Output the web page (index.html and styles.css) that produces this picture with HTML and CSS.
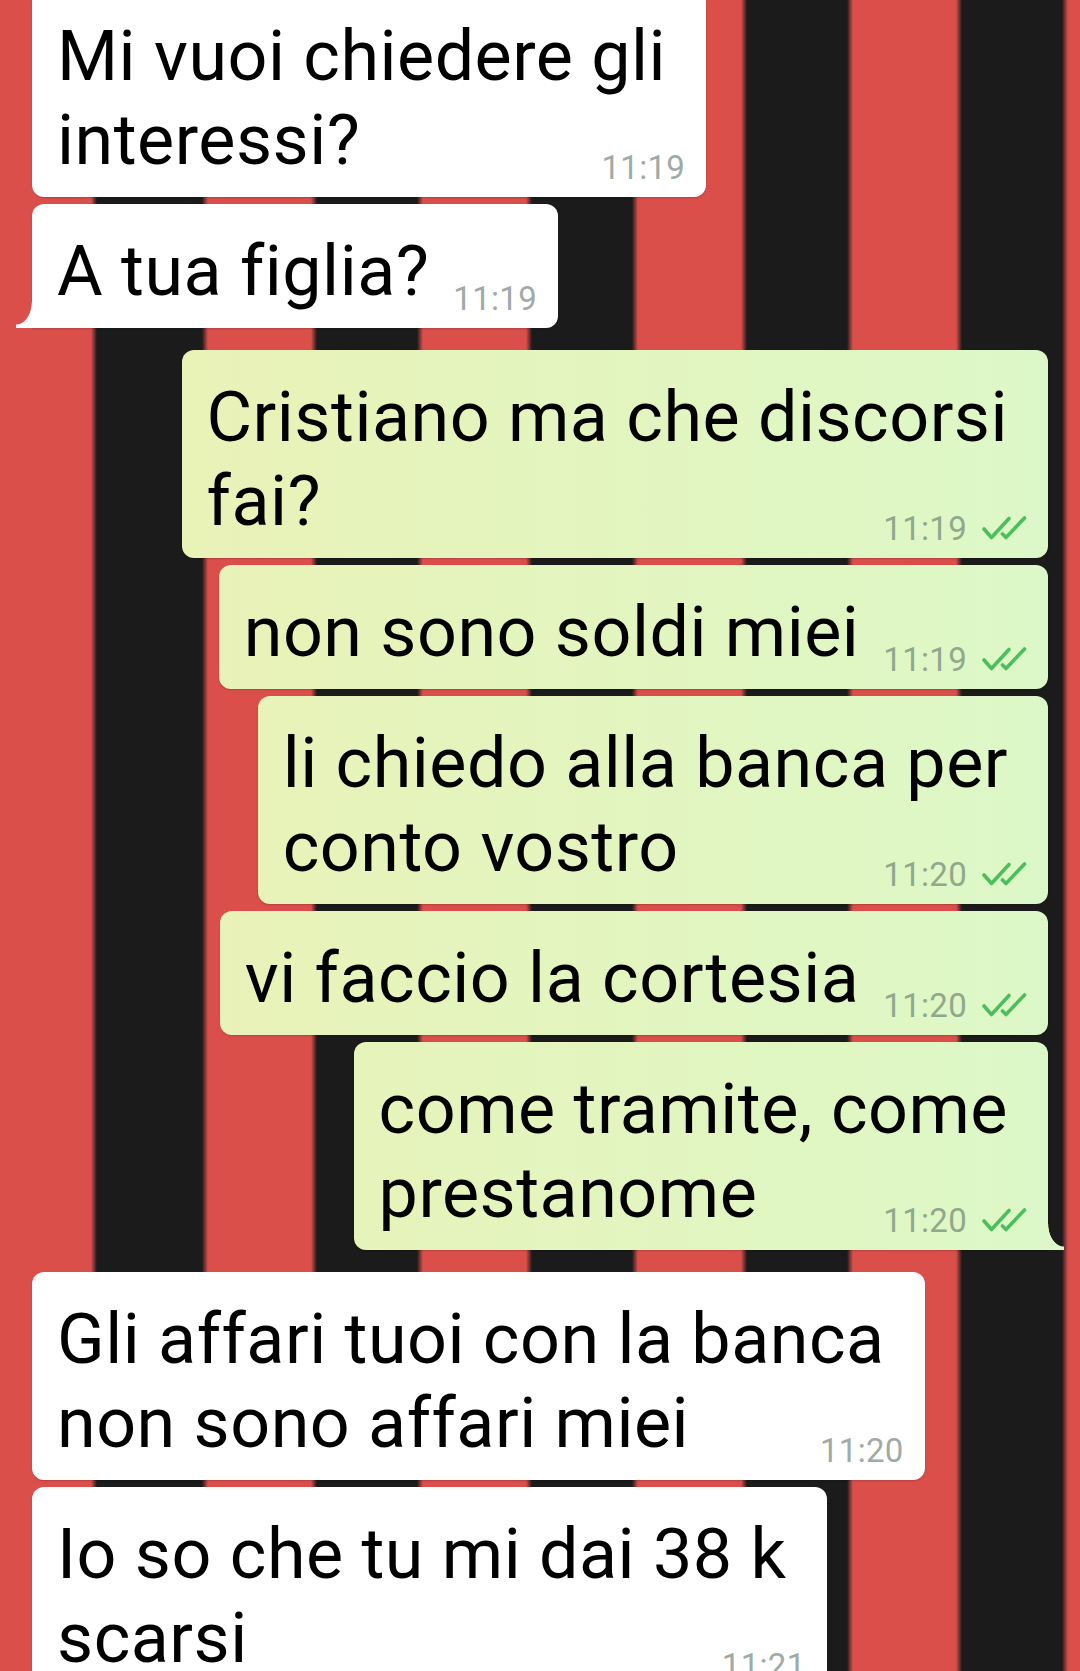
FILE: index.html
```html
<!DOCTYPE html>
<html lang="it">
<head>
  <meta charset="UTF-8" />
  <meta name="viewport" content="width=device-width, initial-scale=1.0"/>
  <title>Chat</title>
  <link rel="stylesheet" href="styles.css">
</head>
<body>

  <div class="chat">
    <div class="msg in">
      <p>Mi vuoi chiedere gli<br>interessi?<span class="meta"><span class="time">11:19</span></span></p>
    </div>
    <div class="msg in tail">
      <p>A tua figlia?<span class="meta"><span class="time">11:19</span></span></p>
    </div>

    <div class="msg out">
      <p>Cristiano ma che discorsi<br>fai?<span class="meta"><span class="time">11:19</span><svg class="ticks" viewBox="0 0 45 24"><path d="M2 13 L9.5 21.5 L27 2.5 M20.5 18 L24 21.5 L42.5 2"/></svg></span></p>
    </div>
    <div class="msg out">
      <p>non sono soldi miei<span class="meta"><span class="time">11:19</span><svg class="ticks" viewBox="0 0 45 24"><path d="M2 13 L9.5 21.5 L27 2.5 M20.5 18 L24 21.5 L42.5 2"/></svg></span></p>
    </div>
    <div class="msg out">
      <p>li chiedo alla banca per<br>conto vostro<span class="meta"><span class="time">11:20</span><svg class="ticks" viewBox="0 0 45 24"><path d="M2 13 L9.5 21.5 L27 2.5 M20.5 18 L24 21.5 L42.5 2"/></svg></span></p>
    </div>
    <div class="msg out">
      <p>vi faccio la cortesia<span class="meta"><span class="time">11:20</span><svg class="ticks" viewBox="0 0 45 24"><path d="M2 13 L9.5 21.5 L27 2.5 M20.5 18 L24 21.5 L42.5 2"/></svg></span></p>
    </div>
    <div class="msg out tail">
      <p>come tramite, come<br>prestanome<span class="meta"><span class="time">11:20</span><svg class="ticks" viewBox="0 0 45 24"><path d="M2 13 L9.5 21.5 L27 2.5 M20.5 18 L24 21.5 L42.5 2"/></svg></span></p>
    </div>

    <div class="msg in">
      <p>Gli affari tuoi con la banca<br>non sono affari miei<span class="meta"><span class="time">11:20</span></span></p>
    </div>
    <div class="msg in">
      <p>Io so che tu mi dai 38 k<br>scarsi<span class="meta"><span class="time">11:21</span></span></p>
    </div>
  </div>

</body>
</html>
```

FILE: styles.css
```css
* {
  box-sizing: border-box;
}

body {
  margin: 0;
  height: 1671px;
  overflow: hidden;
  font-family: Roboto, "Noto Sans", sans-serif;
  color: #000;
  background: repeating-linear-gradient(90deg, #1b1b1b 0 100px, #db4f4b 106px 209px, #1b1b1b 215px);
  background-position: 102px 0;
}

.chat {
  display: flex;
  flex-direction: column;
  padding: 0 32px;
  margin-top: -18px;
}

.msg {
  position: relative;
  display: flow-root;
  width: fit-content;
  margin-top: 7px;
  padding: 25px 40px 15px 25px;
  border-radius: 12px;
  font-size: 70px;
  line-height: 84px;
  letter-spacing: 0.5px;
  box-shadow: 0 1px 2px rgba(0, 0, 0, 0.18);
}

.msg p {
  margin: 0;
}

.msg.in {
  align-self: flex-start;
  background: #fff;
}

.msg.out {
  align-self: flex-end;
  background: linear-gradient(90deg, #ecf1b4 0%, #dcf8c8 100%) fixed;
}

.msg.in + .msg.out,
.msg.out + .msg.in {
  margin-top: 22px;
}

/* little tail on the last bubble of a group */
.msg.in.tail {
  border-bottom-left-radius: 0;
}

.msg.in.tail::before {
  content: "";
  position: absolute;
  left: -16px;
  bottom: 0;
  width: 16px;
  height: 26px;
  background: radial-gradient(16px 23px at 0 0, transparent 96%, #fff 100%);
}

.msg.out.tail {
  border-bottom-right-radius: 0;
}

.msg.out.tail::after {
  content: "";
  position: absolute;
  right: -16px;
  bottom: 0;
  width: 16px;
  height: 26px;
  background: radial-gradient(16px 23px at 100% 0, transparent 96%, #dcf8c8 100%);
}

.meta {
  float: right;
  display: flex;
  align-items: baseline;
  gap: 15px;
  margin: 56px -19px 0 24px;
  font-size: 33px;
  line-height: 28px;
  letter-spacing: 0.3px;
  color: #a0aaa6;
}

.msg.out .meta {
  color: #91a88d;
}

.ticks {
  width: 45px;
  height: 24px;
  fill: none;
  stroke: #4cbf5c;
  stroke-width: 3.6;
  stroke-linecap: round;
  stroke-linejoin: round;
}
```
